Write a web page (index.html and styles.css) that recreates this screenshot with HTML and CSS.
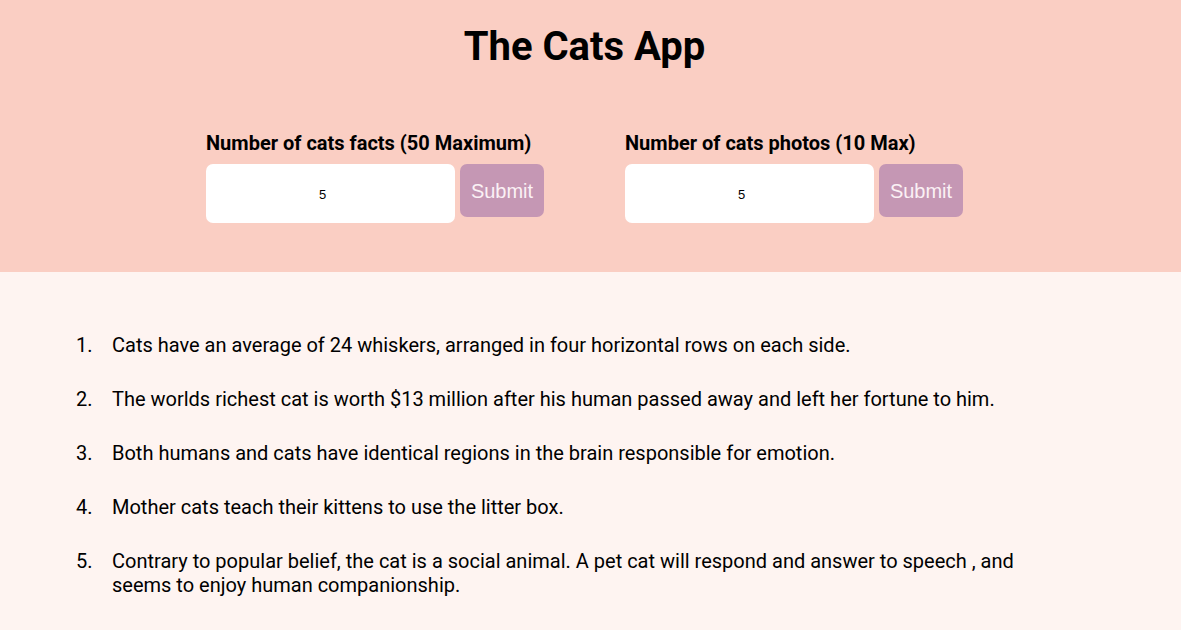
FILE: index.html
```html
<!DOCTYPE html>
<html>
<head>
<meta charset="utf-8">
<link rel="stylesheet" href="styles.css">
</head>
<body>
<header class="top">
  <h1 class="title">The Cats App</h1>
  <div class="forms">
    <form class="group">
      <label class="label">Number of cats facts (50 Maximum)</label>
      <div class="row">
        <input class="num" type="text" value="5">
        <button class="btn" type="button">Submit</button>
      </div>
    </form>
    <form class="group">
      <label class="label">Number of cats photos (10 Max)</label>
      <div class="row">
        <input class="num" type="text" value="5">
        <button class="btn" type="button">Submit</button>
      </div>
    </form>
  </div>
</header>
<main class="content">
  <ol class="facts">
    <li>Cats have an average of 24 whiskers, arranged in four horizontal rows on each side.</li>
    <li>The worlds richest cat is worth $13 million after his human passed away and left her fortune to him.</li>
    <li>Both humans and cats have identical regions in the brain responsible for emotion.</li>
    <li>Mother cats teach their kittens to use the litter box.</li>
    <li>Contrary to popular belief, the cat is a social animal. A pet cat will respond and answer to speech , and seems to enjoy human companionship.</li>
  </ol>
</main>
</body>
</html>
```
FILE: styles.css
```css
* { box-sizing: border-box; }
html, body { margin: 0; padding: 0; }
body {
  font-family: Roboto, "Liberation Sans", sans-serif;
  background: #fef4f1;
  color: #000;
  height: 630px;
  overflow: hidden;
}
.top {
  background: #facec3;
  height: 272px;
  padding-top: 23px;
}
.title {
  margin: 0;
  padding-right: 12px;
  text-align: center;
  font-size: 40px;
  font-weight: 700;
  line-height: 48px;
}
.forms {
  display: flex;
  justify-content: center;
  gap: 81px;
  margin-top: 60px;
  padding-right: 12px;
}
.group {
  display: flex;
  flex-direction: column;
  width: 338px;
}
.label {
  font-size: 20px;
  font-weight: 700;
  line-height: 24px;
  margin-bottom: 9px;
}
.row {
  display: flex;
  align-items: flex-start;
  gap: 5px;
}
.num {
  width: 249px;
  height: 59px;
  border: none;
  border-radius: 7px;
  background: #fff;
  text-align: center;
  padding: 2px 16px 0 0;
  font-family: "Liberation Sans", Arial, sans-serif;
  font-size: 13px;
  color: #000;
  outline: none;
}
.btn {
  width: 84px;
  height: 53px;
  border: none;
  border-radius: 7px;
  background: #c597b4;
  color: #fbf1f5;
  font-family: "Liberation Sans", Arial, sans-serif;
  font-size: 20px;
  padding: 2px 0 0;
}
.content {
  padding: 61px 150px 0 76px;
}
.facts {
  list-style: none;
  counter-reset: fact;
  margin: 0;
  padding: 0;
  display: flex;
  flex-direction: column;
  gap: 30px;
}
.facts li {
  counter-increment: fact;
  display: flex;
  font-size: 20px;
  line-height: 24px;
}
.facts li::before {
  content: counter(fact) ".";
  flex: 0 0 36px;
}
```
